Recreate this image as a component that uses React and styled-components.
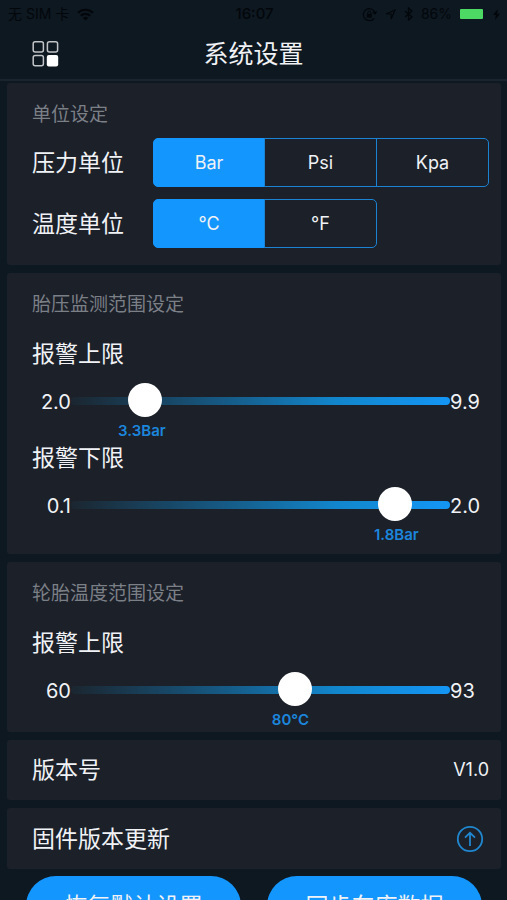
import React, { useState } from "react";
import styled, { createGlobalStyle, css } from "styled-components";

const color = {
  page: "#0e1821",
  card: "#1b2029",
  line: "#1a242e",
  text: "#f0f2f5",
  muted: "#7b7f86",
  blue: "#1496ff",
  outline: "#1c82d4",
  value: "#1c86dc",
  status: "#03070b",
  battery: "#4cd964",
};

const GlobalStyle = createGlobalStyle`
  * { box-sizing: border-box; }
  html, body { margin: 0; background: ${color.page}; }
  body, button, input { font-family: Inter, "Noto Sans CJK SC", sans-serif; }
`;

const Screen = styled.div`
  height: 100vh;
  display: flex;
  flex-direction: column;
  background: ${color.page};
  color: ${color.text};
  overflow: hidden;
`;

const StatusBar = styled.div`
  flex: none;
  display: grid;
  grid-template-columns: 1fr auto 1fr;
  align-items: center;
  height: 28px;
  padding: 0 6px 0 8px;
  color: ${color.status};
  font-size: 14px;
  line-height: 20px;
`;

const StatusGroup = styled.div`
  display: flex;
  align-items: center;
  gap: 8px;
  justify-content: ${(p) => (p.$end ? "flex-end" : "flex-start")};
`;

const Clock = styled.time`
  font-size: 15px;
  font-weight: 500;
`;

const Battery = styled.span`
  width: 23px;
  height: 10px;
  margin-right: 2px;
  border-radius: 1px;
  background: ${color.battery};
`;

const BoltSlot = styled.span`
  display: flex;
  width: 8px;
`;

const NavBar = styled.header`
  flex: none;
  display: grid;
  grid-template-columns: 1fr auto 1fr;
  align-items: center;
  height: 53px;
  padding: 0 32px;
  border-bottom: 2px solid ${color.line};
`;

const MenuButton = styled.button`
  display: flex;
  justify-self: start;
  padding: 0;
  border: 0;
  background: none;
  color: #fff;
`;

const Title = styled.h1`
  margin: 0;
  font-size: 25px;
  font-weight: 400;
  line-height: 36px;
`;

const Content = styled.main`
  flex: 1;
  min-height: 0;
  display: flex;
  flex-direction: column;
  gap: 8px;
  padding: 2px 6px 24px 7px;
  overflow-y: auto;
  scrollbar-width: none;
`;

const Card = styled.section`
  flex: none;
  padding: 19px 12px ${(p) => p.$bottom}px 25px;
  border-radius: 3px;
  background: ${color.card};
`;

const CardTitle = styled.h2`
  margin: 0 0 ${(p) => p.$gap}px;
  color: ${color.muted};
  font-size: 19px;
  font-weight: 400;
  line-height: 26px;
`;

const labelText = css`
  font-size: 23px;
  font-weight: 400;
  line-height: 32px;
`;

const UnitList = styled.div`
  display: flex;
  flex-direction: column;
  gap: 12px;
`;

const UnitRow = styled.div`
  display: grid;
  grid-template-columns: 121px 1fr;
  align-items: center;
`;

const UnitLabel = styled.span`
  ${labelText}
`;

const Segments = styled.div`
  display: grid;
  grid-template-columns: repeat(3, 1fr);
`;

const Segment = styled.button`
  height: 49px;
  margin-left: ${(p) => (p.$first ? 0 : -1)}px;
  padding: 0;
  border: 1px solid ${(p) => (p.$active ? color.blue : color.outline)};
  border-radius: ${(p) => (p.$first ? "5px 0 0 5px" : p.$last ? "0 5px 5px 0" : "0")};
  background: ${(p) => (p.$active ? color.blue : "transparent")};
  color: ${color.text};
  font-size: 18px;
  line-height: 24px;
`;

const Limit = styled.div`
  padding-bottom: 1px;
`;

const LimitLabel = styled.label`
  display: block;
  margin-bottom: 14px;
  ${labelText}
`;

const SliderRow = styled.div`
  display: grid;
  grid-template-columns: 39px 1fr 39px;
  align-items: center;
`;

const Bound = styled.span`
  padding-top: 2px;
  font-size: 20px;
  line-height: 32px;
  text-align: ${(p) => (p.$right ? "right" : "left")};
`;

const Range = styled.input`
  display: block;
  width: 100%;
  height: 34px;
  margin: 0;
  appearance: none;
  background: none;

  &::-webkit-slider-runnable-track {
    height: 8px;
    border-radius: 4px;
    background: linear-gradient(to right, #1b2630, #15608f 45%, #1286cc 70%, #1496f5);
  }

  &::-webkit-slider-thumb {
    appearance: none;
    width: 34px;
    height: 34px;
    margin-top: -14px;
    border-radius: 50%;
    background: #fff;
  }
`;

const ValueRow = styled.div`
  position: relative;
  height: 20px;
  margin: 3px 39px 0;
`;

const Value = styled.output`
  position: absolute;
  top: 0;
  color: ${color.value};
  font-size: 15px;
  font-weight: 600;
  line-height: 20px;
  white-space: nowrap;
`;

const InfoRow = styled.div`
  flex: none;
  display: flex;
  align-items: center;
  justify-content: space-between;
  height: ${(p) => (p.$tall ? 61 : 60)}px;
  padding: 0 12px 0 25px;
  border-radius: 3px;
  background: ${color.card};
  ${labelText}
`;

const Version = styled.span`
  font-size: 18px;
  line-height: 24px;
`;

const UpdateButton = styled.button`
  display: flex;
  margin-right: 5px;
  padding: 0;
  border: 0;
  background: none;
  color: #2087cf;
`;

const Actions = styled.div`
  flex: none;
  display: grid;
  grid-template-columns: 1fr 1fr;
  gap: 26px;
  margin-top: -1px;
  padding: 0 19px;
`;

const ActionButton = styled.button`
  height: 60px;
  padding: 0;
  border: 0;
  border-radius: 30px;
  background: ${color.blue};
  color: ${color.text};
  font-size: 23px;
  line-height: 32px;
  white-space: nowrap;
`;

const WifiIcon = () => (
  <svg width="17" height="13" viewBox="0 0 17 13" fill="none" stroke="currentColor" strokeWidth="2.2">
    <path d="M1 4.8a10.8 10.8 0 0 1 15 0M3.8 7.7a6.8 6.8 0 0 1 9.4 0" />
    <path d="M8.5 12.6 5.8 9.9a4 4 0 0 1 5.4 0z" fill="currentColor" stroke="none" />
  </svg>
);

const RotationLockIcon = () => (
  <svg width="15" height="15" viewBox="0 0 15 15" fill="none" stroke="currentColor">
    <path d="M12.2 11.3A6 6 0 1 1 13 5.5M14.6 4.2 13.2 6.8 10.8 5.3" strokeWidth="1.2" />
    <rect x="4.8" y="6.8" width="5" height="3.8" fill="currentColor" stroke="none" />
    <path d="M5.8 7V5.6a1.5 1.5 0 0 1 3 0V7" strokeWidth="1" />
  </svg>
);

const LocationIcon = () => (
  <svg width="11" height="11" viewBox="0 0 11 11" fill="none" stroke="currentColor" strokeWidth="1.1">
    <path d="M10 1 6.2 10V5H1z" />
  </svg>
);

const BluetoothIcon = () => (
  <svg width="9" height="14" viewBox="0 0 9 14" fill="none" stroke="currentColor" strokeWidth="1.3">
    <path d="m1 4 7 6-3.5 3V1L8 4l-7 6" />
  </svg>
);

const BoltIcon = () => (
  <svg width="7" height="11" viewBox="0 0 7 11" fill="currentColor">
    <path d="M4.8 0 0 6h2.8L2 11l5-6.3H4.1z" />
  </svg>
);

const GridIcon = () => (
  <svg width="27" height="26" viewBox="0 0 27 26" fill="none" stroke="currentColor">
    <g strokeWidth="1.5" strokeOpacity="0.75">
      <rect x="1.2" y="0.8" width="10.2" height="10.2" rx="2" />
      <rect x="15.4" y="0.8" width="10.2" height="10.2" rx="2" />
      <rect x="1.2" y="14.6" width="10.2" height="10.2" rx="2" />
    </g>
    <rect x="14.8" y="14" width="11.4" height="11.4" rx="2" fill="currentColor" stroke="none" />
  </svg>
);

const UpdateIcon = () => (
  <svg width="28" height="28" viewBox="0 0 28 28" fill="none" stroke="currentColor" strokeWidth="1.8">
    <circle cx="14" cy="14" r="12.2" />
    <path d="M14 21V8M9 12.6 14 7.8l5 4.8" />
  </svg>
);

function UnitPicker({ label, options }) {
  const [active, setActive] = useState(options[0]);
  return (
    <UnitRow role="group" aria-label={label}>
      <UnitLabel>{label}</UnitLabel>
      <Segments>
        {options.map((option, i) => (
          <Segment
            key={option}
            type="button"
            aria-pressed={option === active}
            $active={option === active}
            $first={i === 0}
            $last={i === options.length - 1}
            onClick={() => setActive(option)}
          >
            {option}
          </Segment>
        ))}
      </Segments>
    </UnitRow>
  );
}

function LimitSlider({ id, label, min, max, initial, digits, unit }) {
  const [value, setValue] = useState(initial);
  const ratio = (value - min) / (max - min);
  return (
    <Limit>
      <LimitLabel htmlFor={id}>{label}</LimitLabel>
      <SliderRow>
        <Bound $right>{min.toFixed(digits)}</Bound>
        <Range
          id={id}
          type="range"
          min={min}
          max={max}
          step="any"
          value={value}
          onChange={(e) => setValue(Number(e.target.value))}
        />
        <Bound>{max.toFixed(digits)}</Bound>
      </SliderRow>
      <ValueRow>
        <Value htmlFor={id} style={{ left: `calc(${ratio} * (100% - 26px) - 11px)` }}>
          {value.toFixed(digits)}
          {unit}
        </Value>
      </ValueRow>
    </Limit>
  );
}

export default function App() {
  return (
    <Screen>
      <GlobalStyle />
      <StatusBar>
        <StatusGroup>
          <span>无 SIM 卡</span>
          <WifiIcon />
        </StatusGroup>
        <Clock>16:07</Clock>
        <StatusGroup $end>
          <RotationLockIcon />
          <LocationIcon />
          <BluetoothIcon />
          <span>86%</span>
          <Battery />
          <BoltSlot>
            <BoltIcon />
          </BoltSlot>
        </StatusGroup>
      </StatusBar>
      <NavBar>
        <MenuButton type="button" aria-label="菜单">
          <GridIcon />
        </MenuButton>
        <Title>系统设置</Title>
      </NavBar>
      <Content>
        <Card $bottom={17}>
          <CardTitle $gap={10}>单位设定</CardTitle>
          <UnitList>
            <UnitPicker label="压力单位" options={["Bar", "Psi", "Kpa"]} />
            <UnitPicker label="温度单位" options={["°C", "°F"]} />
          </UnitList>
        </Card>
        <Card $bottom={8}>
          <CardTitle $gap={20}>胎压监测范围设定</CardTitle>
          <LimitSlider id="pressure-high" label="报警上限" min={2} max={9.9} initial={3.3} digits={1} unit="Bar" />
          <LimitSlider id="pressure-low" label="报警下限" min={0.1} max={2} initial={1.79} digits={1} unit="Bar" />
        </Card>
        <Card $bottom={1}>
          <CardTitle $gap={20}>轮胎温度范围设定</CardTitle>
          <LimitSlider id="temperature-high" label="报警上限" min={60} max={93} initial={79.8} digits={0} unit="°C" />
        </Card>
        <InfoRow>
          <span>版本号</span>
          <Version>V1.0</Version>
        </InfoRow>
        <InfoRow $tall>
          <span>固件版本更新</span>
          <UpdateButton type="button" aria-label="固件版本更新">
            <UpdateIcon />
          </UpdateButton>
        </InfoRow>
        <Actions>
          <ActionButton type="button">恢复默认设置</ActionButton>
          <ActionButton type="button">同步车库数据</ActionButton>
        </Actions>
      </Content>
    </Screen>
  );
}
